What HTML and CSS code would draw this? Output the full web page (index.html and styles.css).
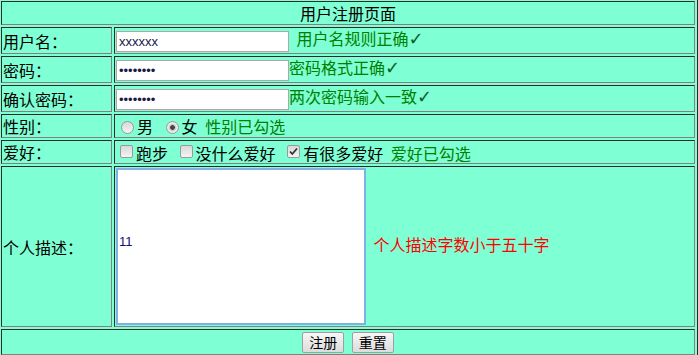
FILE: index.html
```html
<!DOCTYPE html>
<html lang="zh-CN">
<head>
<meta charset="utf-8">
<title>用户注册页面</title>
<link rel="stylesheet" href="styles.css">
</head>
<body>
<form class="reg-form">
<table class="reg-table">
  <colgroup>
    <col class="col-label">
    <col class="col-value">
  </colgroup>
  <tr class="row-title">
    <td colspan="2" class="title-cell">用户注册页面</td>
  </tr>
  <tr class="row-input">
    <td class="label">用户名：</td>
    <td class="value"><input class="text-input" type="text" value="xxxxxx"> <span class="ok">用户名规则正确<span class="check">✓</span></span></td>
  </tr>
  <tr class="row-input">
    <td class="label">密码：</td>
    <td class="value"><input class="text-input" type="password" value="12345678"><span class="ok">密码格式正确<span class="check">✓</span></span></td>
  </tr>
  <tr class="row-input">
    <td class="label">确认密码：</td>
    <td class="value"><input class="text-input" type="password" value="12345678"><span class="ok">两次密码输入一致<span class="check">✓</span></span></td>
  </tr>
  <tr class="row-small">
    <td class="label">性别：</td>
    <td class="value"><input class="radio" type="radio" name="sex">男 <input class="radio" type="radio" name="sex" checked>女 <span class="ok">性别已勾选</span></td>
  </tr>
  <tr class="row-small">
    <td class="label">爱好：</td>
    <td class="value"><input class="checkbox" type="checkbox">跑步 <input class="checkbox" type="checkbox">没什么爱好 <input class="checkbox" type="checkbox" checked>有很多爱好 <span class="ok">爱好已勾选</span></td>
  </tr>
  <tr class="row-desc">
    <td class="label">个人描述：</td>
    <td class="value"><textarea class="desc-input">11</textarea> <span class="warn">个人描述字数小于五十字</span></td>
  </tr>
  <tr class="row-buttons">
    <td colspan="2" class="button-cell"><button type="button" class="btn">注册</button> <button type="button" class="btn">重置</button></td>
  </tr>
</table>
</form>
</body>
</html>
```

FILE: styles.css
```css
html, body {
  margin: 0;
  padding: 0;
  background: #7fffd4;
}

body {
  width: 698px;
  height: 355px;
  overflow: hidden;
  font-family: "Noto Sans CJK SC", "DejaVu Sans", sans-serif;
  font-size: 16px;
  color: #000;
}

.reg-form {
  margin: 0;
}

.reg-table {
  margin: -2px 0 0 -2px;
  width: 700px;
  border-collapse: separate;
  border-spacing: 2px;
  border: 1px solid;
  border-color: #808080 #2a2a2a #2a2a2a #808080;
  background: #7fffd4;
  table-layout: fixed;
}

.col-label { width: 111px; }
.col-value { width: 581px; }

.reg-table td {
  box-sizing: border-box;
  padding: 1px;
  border: 1px solid;
  border-color: #2a2a2a #808080 #808080 #2a2a2a;
  vertical-align: middle;
  line-height: 18px;
  white-space: nowrap;
  overflow: hidden;
  word-spacing: 4px;
}

.row-title td { height: 24px; }
.row-input td { height: 27px; }
.row-small td { height: 24px; }
.row-desc td { height: 159px; }
.row-buttons td { height: 26px; }

.title-cell,
.button-cell {
  text-align: center;
}

.button-cell {
  padding-left: 3px;
}

.ok {
  color: #008000;
}

.warn {
  color: #ff0000;
}

.check {
  font-family: "DejaVu Sans", sans-serif;
  font-weight: bold;
  font-size: 18px;
  color: #0a5f28;
}

.text-input {
  box-sizing: border-box;
  width: 173px;
  height: 21px;
  margin: 0;
  padding: 1px 2px;
  border: 1px solid #a9a9a9;
  background: #fff;
  font-family: "Liberation Sans", Arial, sans-serif;
  font-size: 13px;
  color: #1a1a4a;
  vertical-align: middle;
  outline: none;
}

.radio,
.checkbox {
  -webkit-appearance: none;
  appearance: none;
  box-sizing: border-box;
  width: 13px;
  height: 13px;
  border: 1px solid #9a9a9a;
  background: linear-gradient(#d8d8d8, #f4f4f4);
  vertical-align: -1px;
  outline: none;
}

.radio {
  margin: 3px 3px 0 5px;
  border-radius: 50%;
}

.radio:checked {
  background: radial-gradient(circle, #444 0, #444 2px, #bdbdbd 2.6px, #e6e6e6 4px, #f4f4f4 100%);
}

.checkbox {
  margin: 3px 3px 3px 4px;
  border-radius: 2px;
}

.checkbox:checked {
  background-image: url("data:image/svg+xml;utf8,<svg xmlns='http://www.w3.org/2000/svg' width='11' height='11' viewBox='0 0 11 11'><path d='M2 5.5 L4.3 8 L9 2.5' fill='none' stroke='%23333' stroke-width='1.8'/></svg>"), linear-gradient(#d8d8d8, #f4f4f4);
  background-repeat: no-repeat;
  background-position: center;
}

.desc-input {
  box-sizing: border-box;
  width: 250px;
  height: 157px;
  margin: 0;
  padding: 64px 1px 0 1px;
  border: 2px solid #7fb0e6;
  background: #fff;
  font-family: "Liberation Sans", Arial, sans-serif;
  font-size: 13px;
  color: #10107a;
  resize: none;
  vertical-align: middle;
  overflow: hidden;
  outline: none;
}

.btn {
  box-sizing: border-box;
  width: 42px;
  height: 21px;
  margin: 0;
  padding: 0;
  border: 1px solid #a0a0a0;
  border-radius: 2px;
  background: linear-gradient(#f6f6f6, #dcdcdc);
  font-family: "Noto Sans CJK SC", sans-serif;
  font-size: 14px;
  line-height: 17px;
  word-spacing: normal;
  color: #000;
  vertical-align: middle;
}
```
